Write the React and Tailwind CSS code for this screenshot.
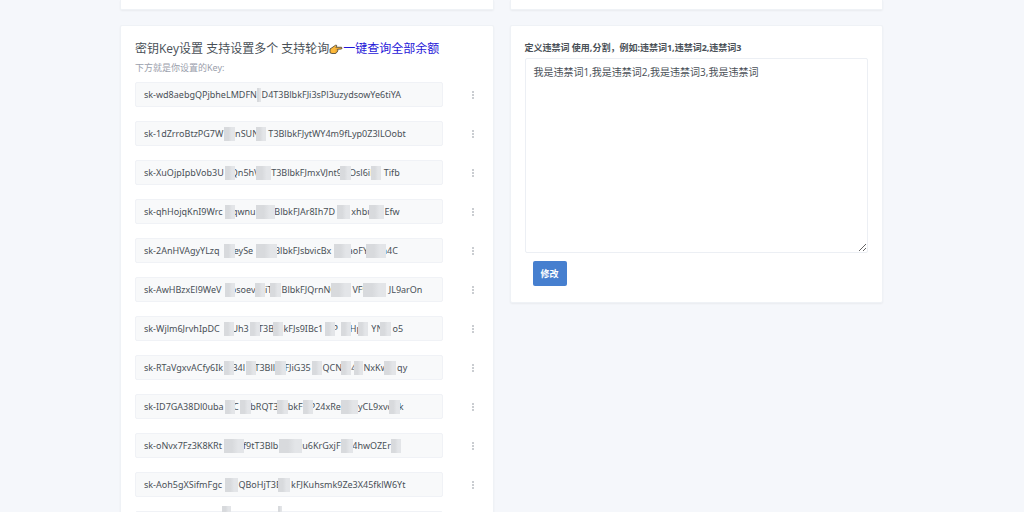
import React from 'react';

// numbers in "parts" are the blank run left for hidden characters,
// masks are [left, width, top] inside the field
const keys = [
  { id: 1, parts: ["sk-wd8aebgQPjbheLMDFN", 2, "D4T3BlbkFJi3sPl3uzydsowYe6tiYA"], masks: [[122, 4]] },
  { id: 2, parts: ["sk-1dZrroBtzPG7W", 5, "nSUN", 4, "T3BlbkFJytWY4m9fLyp0Z3lLOobt"], masks: [[89, 11], [121, 10]] },
  { id: 3, parts: ["sk-XuOjpIpbVob3U", 3, "Qn5hV", 5, "T3BlbkFJmxVJnt9", 3, "Osl6iD", 3, "Tifb"], masks: [[90, 10], [121, 15], [205, 11], [236, 10]] },
  { id: 4, parts: ["sk-qhHojqKnI9Wrc", 4, "qwnu", 8, "BlbkFJAr8Ih7D", 7, "xhbu", 5, "Efw"], masks: [[90, 10], [121, 19], [202, 13], [234, 15]] },
  { id: 5, parts: ["sk-2AnHVAgyYLzq", 6, "eySe", 9, "BlbkFJsbvicBx", 7, "aoFY", 6, "a4C"], masks: [[89, 11], [121, 21], [199, 17], [231, 20]] },
  { id: 6, parts: ["sk-AwHBzxEl9WeV", 4, "osoev", 4, "iT", 4, "BlbkFJQrnNC", 7, "VF9", 9, "JL9arOn"], masks: [[90, 10], [120, 10], [135, 11], [196, 20], [228, 23]] },
  { id: 7, parts: ["sk-Wjlm6JrvhIpDC", 5, "Uh3", 4, "T3B", 4, "kFJs9IBc1", 4, "P", 5, "Hp", 4, "YN", 4, "o5"], masks: [[89, 10], [115, 10], [138, 10], [190, 10], [206, 10], [223, 10], [245, 11]] },
  { id: 8, parts: ["sk-RTaVgxvACfy6Ik", 4, "34l", 4, "T3Bll", 4, "FJiG35", 5, "QCN", 4, "4", 3, "NxKw", 4, "qy"], masks: [[89, 10], [111, 10], [140, 11], [177, 10], [206, 10], [219, 9], [249, 12]] },
  { id: 9, parts: ["sk-ID7GA38Dl0uba", 4, "C", 5, "bRQT3", 4, "bkF", 3, "P24xReI", 6, "yCL9xvc", 3, "k"], masks: [[90, 10], [105, 11], [142, 11], [168, 10], [206, 17], [254, 11]] },
  { id: 10, parts: ["sk-oNvx7Fz3K8KRt", 9, "f9tT3Blb", 8, "0u6KrGxjF", 5, "4hwOZEr"], masks: [[89, 20], [144, 23], [206, 12], [256, 10]] },
  { id: 11, parts: ["sk-Aoh5gXSifmFgc", 7, "QBoHjT3B", 4, "kFJKuhsmk9Ze3X45fklW6Yt"], masks: [[90, 13], [143, 12]] },
  { id: 12, parts: [], masks: [[87, 9, -5], [143, 4, -5]] },
];

const toValue = (parts) => parts.map(p => (typeof p === "number" ? " ".repeat(p) : p)).join("");

const PointingHand = () => (
  <svg viewBox="0 0 28 22" className="w-3.5 h-3 shrink-0" aria-hidden="true">
    <path
      d="M2 11 L8 7 L13 3.5 Q16 2.5 15.5 5.5 L13.5 7.5 L25 7.5 Q27 9 25 11 L17 11.5 Q19 13 17 15 Q18 17 15 17.5 Q15 20 12 20 L6 20 L2 18.5 Z"
      fill="#fdb93a"
      stroke="#3f3a30"
      strokeWidth="1.6"
      strokeLinejoin="round"
    />
    <path d="M13 11.5 H17 M13 15 H17" stroke="#a8752a" strokeWidth="0.8" fill="none" />
  </svg>
);

const MoreIcon = () => (
  <svg viewBox="0 0 4 10" className="w-1 h-2.5" fill="#868e96" aria-hidden="true">
    <circle cx="2" cy="2" r="0.8" />
    <circle cx="2" cy="5" r="0.8" />
    <circle cx="2" cy="8" r="0.8" />
  </svg>
);

const KeyRow = ({ item }) => (
  <li className="flex items-center">
    <div className="relative flex-1">
      <input
        type="text"
        readOnly
        aria-label={`Key ${item.id}`}
        defaultValue={toValue(item.parts)}
        className="block w-full h-[25px] px-2 text-[9px] text-[#495057] bg-[#f8f9fa] border border-[#f0f2f6] rounded-xs"
      />
      {item.masks.map(([left, width, top = 6]) => (
        <span
          key={left}
          className="absolute h-3.5 bg-linear-to-r from-[#d8dadd] from-40% to-[#e3e5e8] to-70%"
          style={{ left, width, top }}
        />
      ))}
    </div>
    <button type="button" aria-label="More" className="w-3 h-6 ml-6 flex items-center justify-center">
      <MoreIcon />
    </button>
  </li>
);

const Card = ({ children }) => (
  <section className="bg-white border border-[#eff2f6] rounded-xs shadow-xs px-3.5 py-4">{children}</section>
);

const App = () => {
  return (
    <main className="h-screen overflow-hidden bg-[#f5f7fb] pr-[21px] font-['Noto_Sans','Noto_Sans_CJK_SC',sans-serif] text-[#495057]">
      <div className="max-w-[763px] mx-auto">
        <div className="grid grid-cols-2 gap-4">
          <div className="h-2.5 bg-white border border-t-0 border-[#eff2f6] rounded-b-xs shadow-xs" />
          <div className="h-2.5 bg-white border border-t-0 border-[#eff2f6] rounded-b-xs shadow-xs" />
        </div>

        <div className="grid grid-cols-2 gap-4 items-start mt-[15px]">
          <Card>
            <h2 className="flex items-center text-[12px] leading-3.5 whitespace-nowrap font-['Open_Sans','Noto_Sans_CJK_SC',sans-serif]">
              <span>密钥Key设置 支持设置多个 支持轮询</span>
              <PointingHand />
              <a href="#balance" className="text-[#1f17d8]">一键查询全部余额</a>
            </h2>
            <p className="mt-1.5 text-[9px] leading-3 text-[#9aa0ac]">下方就是你设置的Key:</p>
            <ul className="mt-2 flex flex-col gap-3.5">
              {keys.map(item => (
                <KeyRow key={item.id} item={item} />
              ))}
            </ul>
          </Card>

          <Card>
            <form>
              <label htmlFor="words" className="block text-[9px] leading-3 font-bold">
                定义违禁词 使用,分割，例如:违禁词1,违禁词2,违禁词3
              </label>
              <textarea
                id="words"
                defaultValue="我是违禁词1,我是违禁词2,我是违禁词3,我是违禁词"
                className="block w-full h-[195px] mt-1 px-2 py-1.5 text-[10px] leading-3.5 border border-[#eceff4] rounded-xs resize-y font-['Open_Sans','Noto_Sans_CJK_SC',sans-serif]"
              />
              <button type="button" className="ml-2 mt-2 h-[25px] px-2 text-[9px] font-bold text-white bg-[#467fcf] rounded-xs">
                修改
              </button>
            </form>
          </Card>
        </div>
      </div>
    </main>
  );
};

export default App;
